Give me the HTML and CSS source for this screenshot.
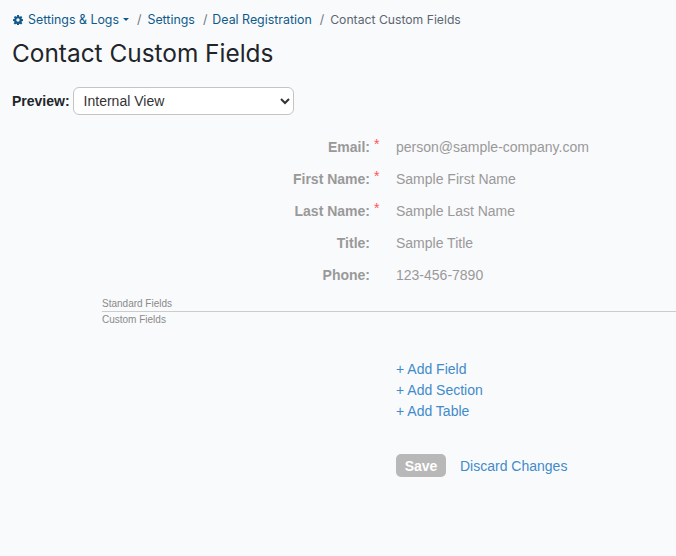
FILE: index.html
```html
<!DOCTYPE html>
<html lang="en">
<head>
<meta charset="utf-8">
<title>Contact Custom Fields</title>
<link rel="stylesheet" href="styles.css">
</head>
<body>
<nav class="crumbs">
  <a class="crumb" href="#"><svg class="gear" viewBox="0 0 16 16" width="10" height="10"><path fill-rule="evenodd" d="M6.6 0h2.800l.4 2.200 1.200.5L12.900 1.400l2 2-1.300 1.900.5 1.200 2.200.4v2.800l-2.200.4-.5 1.200 1.300 1.900-2 2-1.900-1.300-1.200.5-.4 2.200H6.600l-.4-2.200-1.200-.5-1.900 1.300-2-2 1.300-1.900-.5-1.200L0 9.500V6.700l2.200-.4.5-1.200L1.400 3.400l2-2L5 2.700l1.200-.5zM8 5.300a2.700 2.700 0 1 0 0 5.400 2.700 2.700 0 0 0 0-5.400z"/></svg>Settings &amp; Logs<span class="caret"></span></a>
  <span class="sep">/</span><a class="crumb" href="#">Settings</a>
  <span class="sep narrow">/</span><a class="crumb" href="#">Deal Registration</a>
  <span class="sep">/</span><span class="current">Contact Custom Fields</span>
</nav>
<h1 class="title">Contact Custom Fields</h1>
<div class="preview">
  <label class="preview-label" for="view">Preview:</label>
  <select id="view" class="preview-select"><option>Internal View</option></select>
</div>
<section class="fields">
  <div class="row"><div class="key">Email:<span class="req">*</span></div><div class="val">person@sample-company.com</div></div>
  <div class="row"><div class="key">First Name:<span class="req">*</span></div><div class="val">Sample First Name</div></div>
  <div class="row"><div class="key">Last Name:<span class="req">*</span></div><div class="val">Sample Last Name</div></div>
  <div class="row"><div class="key">Title:</div><div class="val">Sample Title</div></div>
  <div class="row"><div class="key">Phone:</div><div class="val">123-456-7890</div></div>
</section>
<div class="divider">
  <div class="divider-label top">Standard Fields</div>
  <div class="divider-label">Custom Fields</div>
</div>
<div class="actions">
  <a href="#">+ Add Field</a>
  <a href="#">+ Add Section</a>
  <a href="#">+ Add Table</a>
</div>
<div class="footer">
  <button class="save" type="button">Save</button>
  <a class="discard" href="#">Discard Changes</a>
</div>
</body>
</html>
```
FILE: styles.css
```css
* { box-sizing: border-box; }
html, body { margin: 0; height: 100%; overflow: hidden; }
body {
  background: #f9fafc;
  color: #212529;
  font-family: "Liberation Sans", Arial, sans-serif;
  font-size: 14px;
  padding: 12px 0 0 12px;
}
a { text-decoration: none; }
.crumbs {
  display: flex;
  align-items: center;
  height: 15px;
  font-family: Inter, Lato, sans-serif;
  font-size: 12.4px;
  color: #5c6670;
}
.crumb { color: #0f5a8a; display: inline-flex; align-items: center; }
.gear { fill: #0f5a8a; margin: 0 5px 0 1px; }
.caret {
  width: 0; height: 0; margin-left: 4px;
  border-left: 3px solid transparent;
  border-right: 3px solid transparent;
  border-top: 3px solid #0f5a8a;
}
.sep { margin: 0 6px 0 8px; color: #6c757d; }
.sep.narrow { margin-right: 5px; }
.current { color: #5c6670; font-size: 12.2px; }
.title {
  margin: 11px 0 0;
  font-family: Inter, Lato, sans-serif;
  font-size: 24.4px;
  line-height: 30px;
  font-weight: 400;
  color: #212529;
}
.preview { display: flex; align-items: center; margin-top: 19px; height: 28px; }
.preview-label { font-weight: 700; margin-right: 3px; }
.preview-select {
  width: 221px; height: 28px;
  padding: 0 0 0 6px;
  border: 1px solid #c4c4c4;
  border-radius: 6px;
  background: #fff;
  color: #333;
  font: 14px "Liberation Sans", Arial, sans-serif;
}
.fields { margin-top: 16px; }
.row { display: flex; height: 32px; align-items: center; color: #999; }
.key { width: 358px; text-align: right; font-weight: 700; position: relative; }
.req { position: absolute; left: 362px; top: -3px; color: #f55; font-weight: 400; }
.val { margin-left: 26px; }
.divider { margin: 6px 0 0 90px; font-size: 10px; color: #8a8a8a; }
.divider-label { height: 14px; line-height: 15px; }
.divider-label.top { border-bottom: 1px solid #ccc; height: 15px; line-height: 13px; margin-right: -12px; }
.actions { display: flex; flex-direction: column; margin: 33px 0 0 384px; }
.actions a { color: #428bca; height: 21px; line-height: 21px; }
.footer { display: flex; align-items: center; margin: 32px 0 0 384px; }
.save {
  width: 50px; height: 23px; padding: 0;
  border: 0; border-radius: 5px;
  background: #b8b8b8; color: #fff;
  font: 700 14px "Liberation Sans", Arial, sans-serif;
}
.discard { margin-left: 14px; color: #428bca; }
```
